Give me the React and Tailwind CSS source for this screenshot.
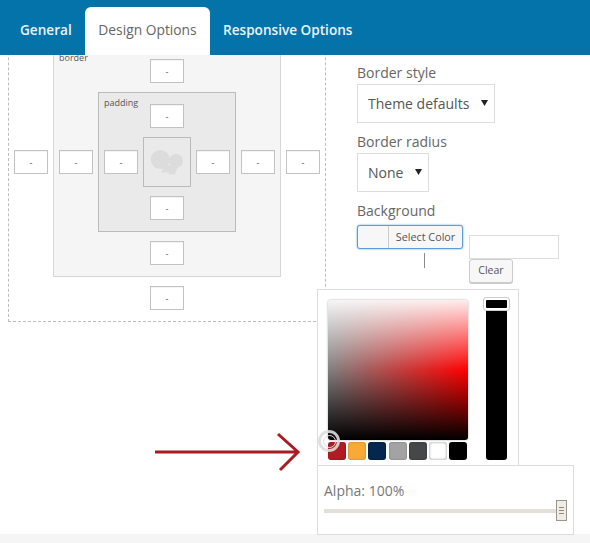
function Val() {
  return (
    <div className="w-[34px] h-[24px] shrink-0 border border-[#c2c2c2] bg-white shadow-[inset_0_1px_1px_rgba(0,0,0,0.05)] flex items-center justify-center text-[9px] leading-none text-[#555]">
      -
    </div>
  );
}

function Box({ label, className, children }) {
  return (
    <div className={"relative flex flex-col items-center gap-[9px] pt-[11px] pb-[11px] px-[5px] border " + className}>
      <span className="absolute left-[5px] top-[4px] text-[9px] leading-[12px] text-[#555]">{label}</span>
      <Val />
      <div className="flex items-center gap-[5px]">
        <Val />
        {children}
        <Val />
      </div>
      <Val />
    </div>
  );
}

function Field({ label, children }) {
  return (
    <div className="flex flex-col items-start">
      <span className="text-[14px] leading-[20px] text-[#666] mb-[1px]">{label}</span>
      {children}
    </div>
  );
}

function Select({ value, className }) {
  return (
    <div className={"relative h-[39px] " + className}>
      <select className="appearance-none w-full h-full border border-[#dddddd] bg-white pl-[10px] text-[14px] text-[#555] font-['Open_Sans',sans-serif]">
        <option>{value}</option>
      </select>
      <svg className="absolute right-[7px] top-[16px] pointer-events-none" width="7" height="6" viewBox="0 0 7 6">
        <path d="M0 0 H7 L3.5 6 Z" fill="#222222" />
      </svg>
    </div>
  );
}

const swatches = [
  "bg-[#b01c22] shadow-[inset_0_0_2px_rgba(0,0,0,0.3)]",
  "bg-[#f9a937] shadow-[inset_0_0_2px_rgba(0,0,0,0.3)]",
  "bg-[#03274f] shadow-[inset_0_0_2px_rgba(0,0,0,0.3)]",
  "bg-[#a3a3a3] shadow-[inset_0_0_2px_rgba(0,0,0,0.3)]",
  "bg-[#454849] shadow-[inset_0_0_2px_rgba(0,0,0,0.3)]",
  "bg-[#ffffff] shadow-[inset_0_0_3px_rgba(0,0,0,0.45)]",
  "bg-[#000000]",
];

export default function App() {
  return (
    <div className="relative w-[590px] h-[543px] overflow-hidden bg-white flex flex-col font-['Open_Sans',sans-serif]">
      <div className="h-[55px] shrink-0 bg-[#0473aa] flex items-end pl-[7px] relative z-10">
        <div className="pl-[13px] w-[78px] h-[48px] flex items-center pb-[1px] text-[13.6px] font-semibold text-[#eaf3f8]">General</div>
        <div className="h-[48px] w-[125px] flex items-center justify-center pb-[1px] rounded-t-[6px] bg-white text-[13.8px] text-[#666]">Design Options</div>
        <div className="px-[13px] h-[48px] flex items-center pb-[1px] text-[13.6px] font-semibold text-[#eaf3f8]">Responsive Options</div>
      </div>

      <div className="flex-1 flex items-start overflow-hidden">
        <div className="ml-[8px] mt-[-53px] w-[318px] shrink-0">
          <Box label="margin" className="w-[318px] border-dashed border-[#bdbdbd] bg-white">
            <Box label="border" className="w-[228px] border-[#d6d6d6] bg-[#f5f5f5]">
              <Box label="padding" className="w-[138px] border-[#bbbbbb] bg-[#eaeaea]">
                <div className="w-[48px] h-[50px] border border-[#bbbbbb] flex items-center justify-center">
                  <svg width="46" height="48" viewBox="0 0 46 48" className="block">
                    <circle cx="16.3" cy="21.5" r="9.5" fill="#dcdcdc" />
                    <circle cx="32" cy="23" r="7" fill="#dcdcdc" />
                    <path d="M22 27 L34 28 L31 36.5 L25.5 36.5 L24.5 34.5 L17 34.5 L19.5 30 Z" fill="#dcdcdc" />
                  </svg>
                </div>
              </Box>
            </Box>
          </Box>
        </div>

        <div className="ml-[31px] flex flex-col gap-[9px] pt-[8px]">
          <Field label="Border style">
            <Select value="Theme defaults" className="w-[138px]" />
          </Field>
          <Field label="Border radius">
            <Select value="None" className="w-[72px]" />
          </Field>
          <Field label="Background">
            <div className="flex items-start gap-[6px] mt-[3px]">
              <div className="flex flex-col items-center">
                <div className="h-[24px] w-[106px] flex rounded-[3px] border border-[#5b9dd9] shadow-[0_0_2px_rgba(30,140,190,0.8)] bg-[#f7f7f7] overflow-hidden">
                  <div className="w-[31px] border-r border-[#cccccc]"></div>
                  <div className="flex-1 flex items-center justify-center text-[10.8px] text-[#555]">Select Color</div>
                </div>
                <div className="w-px h-[15px] mt-[4px] bg-[#8a8a8a] translate-x-[14px]"></div>
              </div>
              <div className="flex flex-col items-start mt-[10px]">
                <div className="w-[90px] h-[24px] border border-[#dddddd] bg-white"></div>
                <div className="w-[44px] h-[24px] rounded-[3px] border border-[#cccccc] bg-[#f7f7f7] shadow-[0_1px_0_#cccccc] flex items-center justify-center text-[10.5px] text-[#555]">Clear</div>
              </div>
            </div>
          </Field>
        </div>
      </div>

      <div className="h-[9px] shrink-0 bg-[#f5f5f5]"></div>

      {/* colour picker popover */}
      <div className="absolute left-[317px] top-[289px] z-20">
        <div className="relative w-[202px] h-[177px] border border-[#dddddd] bg-white">
          <div className="absolute left-[10px] top-[10px] w-[140px] h-[140px] rounded-[3px] shadow-[0_0_2px_rgba(0,0,0,0.4)] bg-[linear-gradient(to_bottom,rgba(255,255,255,0.93),rgba(255,255,255,0)_50%,rgba(0,0,0,0)_50%,#000000),linear-gradient(to_right,#808080,#ff0000)]"></div>
          <div className="absolute left-[10px] top-[152px] flex gap-[2.2px]">
            {swatches.map((c, i) => (
              <div key={i} className={"w-[18px] h-[18px] rounded-[3px] " + c}></div>
            ))}
          </div>
          <div className="absolute left-[168px] top-[8px] w-[21px] h-[162px] rounded-[3px] bg-black"></div>
          <div className="absolute left-[165px] top-[7px] w-[27px] h-[14px] rounded-[3px] border border-[#cccccc] bg-white p-[2px]">
            <div className="w-full h-full rounded-[1px] bg-black"></div>
          </div>
          <div className="absolute left-[0px] top-[140px] w-[22px] h-[22px] rounded-full border-[3px] border-[#dddddd]/90 flex items-center justify-center">
            <div className="w-[13px] h-[13px] rounded-full border border-[#dddddd]"></div>
          </div>
        </div>
        <div className="mt-[-1px] w-[257px] h-[70px] border border-[#dddddd] bg-white px-[6px] pt-[15px]">
          <div className="text-[14px] leading-[20px] text-[#777]">Alpha: 100%</div>
          <div className="relative mt-[8px] w-[237px] h-[4px] bg-[#e4dfd8]">
            <div className="absolute right-[-6px] top-[-9px] w-[11px] h-[21px] border border-[#9c978c] bg-[#efece6] flex flex-col items-center justify-center gap-[2px]">
              <div className="w-[5px] h-px bg-[#8f8a80]"></div>
              <div className="w-[5px] h-px bg-[#8f8a80]"></div>
              <div className="w-[5px] h-px bg-[#8f8a80]"></div>
            </div>
          </div>
        </div>
      </div>

      {/* annotation arrow */}
      <svg className="absolute left-[150px] top-[428px] z-30" width="155" height="46" viewBox="0 0 155 46">
        <path d="M5 24 H148 M128 6 L148 24 L130 42" fill="none" stroke="#a81c22" strokeWidth="3" />
      </svg>
    </div>
  );
}
